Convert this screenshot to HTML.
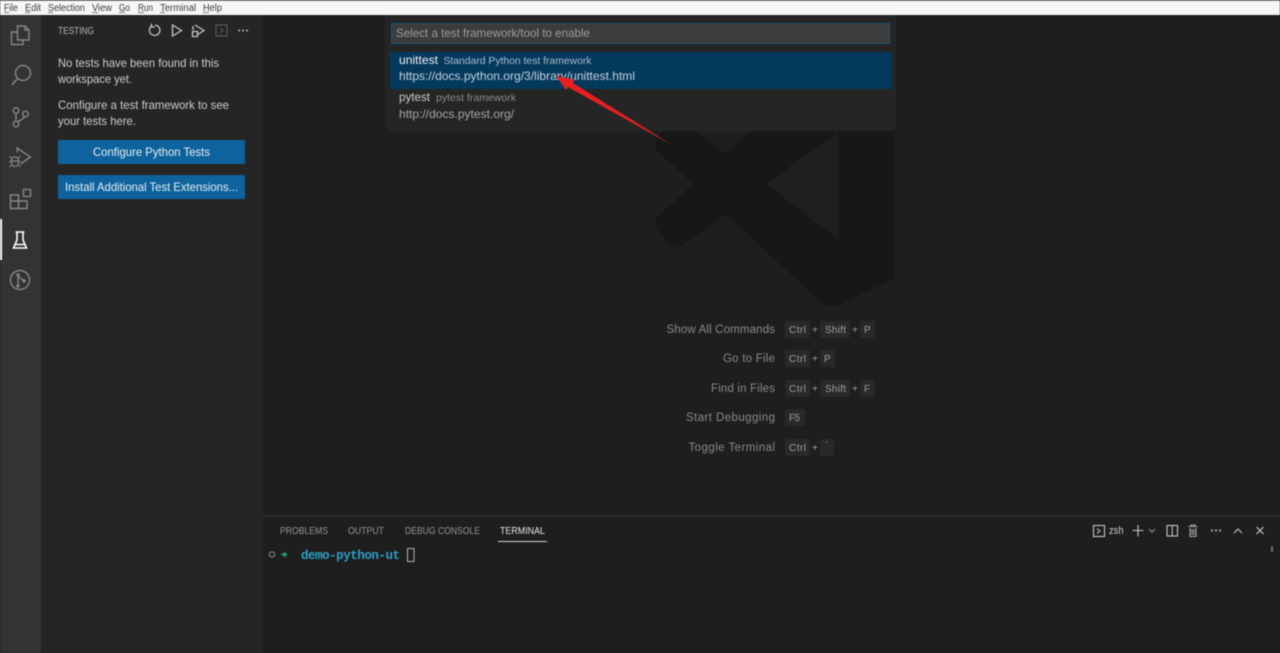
<!DOCTYPE html>
<html lang="en">
<head>
<meta charset="utf-8">
<title>Testing</title>
<style>
html,body{margin:0;padding:0;background:#1e1e1e;width:1280px;height:653px;overflow:hidden}
svg{display:block;position:absolute;left:0;top:0;filter:blur(.4px)}
text{font-family:"Liberation Sans",sans-serif;white-space:pre}
.ic{fill:none;stroke:#868686;stroke-width:1.4}
.s{fill:none;stroke:#c5c5c5;stroke-width:1.3}
.lbl{font-size:11.5px;fill:#8a8a8a}
.cap{fill:#292929}
.tab{font-size:10.5px;fill:#949494}
.k{font-size:10px;fill:#a0a0a0}
.m{font-size:10px;fill:#3c3c3c}
</style>
</head>
<body>
<svg width="1280" height="653" viewBox="0 0 1280 653" xmlns="http://www.w3.org/2000/svg">
<!-- base -->
<rect width="1280" height="653" fill="#1e1e1e"/>
<!-- watermark logo -->
<path d="M832 62 L894 89 V279 L838 305 Q830 308 822 303 L726 214 L681 246 Q674 250 668 243 L657 229 Q652 222 659 216 L693 184 L659 152 Q652 146 657 139 L668 125 Q674 118 681 122 L726 154 L822 65 Q826 61 832 62 Z" fill="#171717"/>
<path d="M766 184 L839 131 V240 Z" fill="#1f1f1f"/>
<!-- activity bar and sidebar -->
<rect x="0" y="15" width="41" height="638" fill="#333333"/>
<rect x="41" y="15" width="222" height="638" fill="#252526"/>
<!-- menu bar -->
<rect width="1280" height="15" fill="#f6f6f6"/>
<rect width="1280" height="1" fill="#8a8a8a"/>
<text x="4" y="11" textLength="14" lengthAdjust="spacingAndGlyphs" class="m">File</text>
<text x="25" y="11" textLength="16" lengthAdjust="spacingAndGlyphs" class="m">Edit</text>
<text x="48" y="11" textLength="37" lengthAdjust="spacingAndGlyphs" class="m">Selection</text>
<text x="92" y="11" textLength="20" lengthAdjust="spacingAndGlyphs" class="m">View</text>
<text x="119" y="11" textLength="11" lengthAdjust="spacingAndGlyphs" class="m">Go</text>
<text x="138" y="11" textLength="15" lengthAdjust="spacingAndGlyphs" class="m">Run</text>
<text x="160" y="11" textLength="36" lengthAdjust="spacingAndGlyphs" class="m">Terminal</text>
<text x="203" y="11" textLength="19" lengthAdjust="spacingAndGlyphs" class="m">Help</text>
<path d="M4 12.5h5M25 12.5h5M48 12.5h5M92 12.5h6M119 12.5h6M138 12.5h6M160 12.5h5M203 12.5h6" stroke="#555" stroke-width=".7" fill="none"/>
<!-- activity icons -->
<g class="ic">
<path d="M17.5 26 H25 L29 30 V40 H17.5 Z M25 26 V30 H29"/>
<path d="M17.5 32 H11.5 V44.5 H23 V40"/>
<circle cx="23" cy="73" r="7.5"/><path d="M17.5 78.5 L12 85" stroke-width="1.6"/>
<circle cx="16" cy="110.5" r="2.8"/><circle cx="16" cy="124" r="2.8"/><circle cx="25.5" cy="114" r="2.8"/>
<path d="M16 113.3 V121.2 M24.5 116.7 Q22 120 17.5 121.8"/>
<path d="M17.5 152.5 L17 148 L30.5 157 L20.5 164"/>
<path d="M11.5 159.5 A3.7 3.7 0 0 1 18.5 159.5 V163 A3.5 3.5 0 0 1 11.5 163 Z M11.5 161 H18.5" stroke-width="1.2"/>
<path d="M11.5 158 L9.5 156 M18.5 158 L20.5 156 M11.5 161.5 H9 M18.5 161.5 H21 M11.5 165 L9.5 167 M18.5 165 L20.5 167" stroke-width="1"/>
<path d="M10.5 195 H18.5 V201 H27 V208.5 H10.5 Z M10.5 201 H18.5 V208.5"/>
<rect x="23.5" y="189.5" width="7" height="7"/>
<circle cx="20" cy="280" r="9.5"/>
<path d="M18 275 V285 M18 276 L24 281"/>
</g>
<circle cx="18" cy="275" r="1.7" fill="#868686"/><circle cx="18" cy="286" r="1.7" fill="#868686"/><circle cx="24" cy="281" r="1.7" fill="#868686"/>
<rect x="0" y="219" width="2" height="41" fill="#fff"/>
<path d="M15.5 232 H24.5 M17 232 V240 L13.5 248 H26.5 L23 240 V232 M15 244.5 H25" fill="none" stroke="#fff" stroke-width="1.6"/>
<!-- sidebar -->
<text x="58" y="34" textLength="36" lengthAdjust="spacingAndGlyphs" style="font-size:10.5px" fill="#b5b5b5">TESTING</text>
<g class="s">
<path d="M151 26.5 A5.2 5.2 0 1 0 155 25 M151.5 23.5 V27 H155"/>
<path d="M172.5 25 L181.5 30.5 L172.5 36 Z"/>
<path d="M195 25 L204 30.5 L197 35 M193 30 V26"/>
<rect x="192.5" y="31.5" width="5" height="5"/>
</g>
<rect x="216" y="25" width="11" height="11" fill="none" stroke="#5f5f5f"/>
<path d="M220 28 L223 30.5 L220 33" fill="none" stroke="#5f5f5f"/>
<g fill="#c5c5c5"><circle cx="239" cy="30.5" r="1"/><circle cx="243" cy="30.5" r="1"/><circle cx="247" cy="30.5" r="1"/></g>
<text x="58" y="67" textLength="161" lengthAdjust="spacingAndGlyphs" style="font-size:12px" fill="#cccccc">No tests have been found in this</text>
<text x="58" y="83" textLength="74" lengthAdjust="spacingAndGlyphs" style="font-size:12px" fill="#cccccc">workspace yet.</text>
<text x="58" y="109" textLength="171" lengthAdjust="spacingAndGlyphs" style="font-size:12px" fill="#cccccc">Configure a test framework to see</text>
<text x="58" y="125" textLength="78" lengthAdjust="spacingAndGlyphs" style="font-size:12px" fill="#cccccc">your tests here.</text>
<rect x="58" y="140" width="187" height="24" rx="1" fill="#0e639c"/>
<rect x="58" y="175" width="187" height="24" rx="1" fill="#0e639c"/>
<text x="93" y="156" textLength="117" lengthAdjust="spacingAndGlyphs" style="font-size:12px" fill="#e6eef4">Configure Python Tests</text>
<text x="65" y="191" textLength="173" lengthAdjust="spacingAndGlyphs" style="font-size:12px" fill="#e6eef4">Install Additional Test Extensions...</text>
<!-- quick pick -->
<path d="M385 15 H896 V125 Q896 131 890 131 H391 Q385 131 385 125 Z" fill="#252526"/>
<rect x="391.5" y="23.5" width="498" height="20" fill="#3c3c3c" stroke="#1f5577"/>
<text x="396" y="37" textLength="194" lengthAdjust="spacingAndGlyphs" style="font-size:12px" fill="#9d9d9d">Select a test framework/tool to enable</text>
<rect x="390" y="52" width="502" height="37" fill="#04395e"/>
<text x="399" y="64" textLength="39" lengthAdjust="spacingAndGlyphs" style="font-size:12px" fill="#f0f0f0">unittest</text>
<text x="443.5" y="64" textLength="148" lengthAdjust="spacingAndGlyphs" style="font-size:10.5px" fill="#a9bdcb">Standard Python test framework</text>
<text x="399" y="80" textLength="236" lengthAdjust="spacingAndGlyphs" style="font-size:12px" fill="#c3d0da">https://docs.python.org/3/library/unittest.html</text>
<text x="399" y="101" textLength="31" lengthAdjust="spacingAndGlyphs" style="font-size:12px" fill="#cccccc">pytest</text>
<text x="436" y="101" textLength="80" lengthAdjust="spacingAndGlyphs" style="font-size:10.5px" fill="#8c8c8c">pytest framework</text>
<text x="399" y="118" textLength="115" lengthAdjust="spacingAndGlyphs" style="font-size:12px" fill="#a5a5a5">http://docs.pytest.org/</text>
<!-- red arrow -->
<path d="M556 76 L574 79.5 L573 83 L672 145 L568 87 L566 90 Z" fill="#e6201f"/>
<!-- shortcuts -->
<text x="666.5" y="333" textLength="108.5" class="lbl">Show All Commands</text>
<text x="723" y="362" textLength="52" class="lbl">Go to File</text>
<text x="711" y="392" textLength="64" class="lbl">Find in Files</text>
<text x="686" y="421" textLength="89" class="lbl">Start Debugging</text>
<text x="688.5" y="451" textLength="86.5" class="lbl">Toggle Terminal</text>
<g class="cap">
<rect x="785" y="321" width="25" height="17" rx="2"/><rect x="820" y="321" width="30" height="17" rx="2"/><rect x="860" y="321" width="15" height="17" rx="2"/>
<rect x="785" y="350" width="25" height="17" rx="2"/><rect x="820" y="350" width="15" height="17" rx="2"/>
<rect x="785" y="380" width="25" height="17" rx="2"/><rect x="820" y="380" width="30" height="17" rx="2"/><rect x="860" y="380" width="15" height="17" rx="2"/>
<rect x="785" y="409" width="20" height="17" rx="2"/>
<rect x="785" y="439" width="25" height="17" rx="2"/><rect x="820" y="439" width="14" height="17" rx="2"/>
</g>
<text x="789" y="333" textLength="17" class="k">Ctrl</text><text x="812" y="333" class="k">+</text><text x="825" y="333" textLength="21" class="k">Shift</text><text x="852" y="333" class="k">+</text><text x="864" y="333" class="k">P</text>
<text x="789" y="362" textLength="17" class="k">Ctrl</text><text x="812" y="362" class="k">+</text><text x="824" y="362" class="k">P</text>
<text x="789" y="392" textLength="17" class="k">Ctrl</text><text x="812" y="392" class="k">+</text><text x="825" y="392" textLength="21" class="k">Shift</text><text x="852" y="392" class="k">+</text><text x="864" y="392" class="k">F</text>
<text x="789" y="421" textLength="11" class="k">F5</text>
<text x="789" y="451" textLength="17" class="k">Ctrl</text><text x="812" y="451" class="k">+</text><text x="825" y="449" class="k">`</text>
<!-- panel -->
<rect x="263" y="516" width="1017" height="137" fill="#1e1e1e"/>
<rect x="263" y="515.5" width="1017" height="1" fill="#3a3a3a"/>
<text x="280" y="534" textLength="48" lengthAdjust="spacingAndGlyphs" class="tab">PROBLEMS</text>
<text x="348" y="534" textLength="36" lengthAdjust="spacingAndGlyphs" class="tab">OUTPUT</text>
<text x="405" y="534" textLength="75" lengthAdjust="spacingAndGlyphs" class="tab">DEBUG CONSOLE</text>
<text x="500" y="534" textLength="45" lengthAdjust="spacingAndGlyphs" style="font-size:10.5px" fill="#e7e7e7">TERMINAL</text>
<rect x="498" y="541" width="49" height="1" fill="#d5d5d5"/>
<circle cx="272" cy="554.5" r="2.7" fill="none" stroke="#7d7d7d" stroke-width="1.2"/>
<path d="M281 554.5 H286 M284 552.3 L286.4 554.5 L284 556.7" fill="none" stroke="#23a675" stroke-width="1.4"/>
<text x="301" y="559" textLength="99" style="font-family:'Liberation Mono',monospace;font-size:12.5px;font-weight:bold" fill="#2d9fc7">demo-python-ut</text>
<rect x="407.5" y="548.5" width="6.5" height="13" fill="none" stroke="#b5b5b5"/>
<!-- panel actions -->
<rect x="1093.5" y="525.5" width="11" height="11" fill="none" stroke="#c5c5c5" stroke-width="1.1"/>
<path d="M1097 528.5 L1100 531 L1097 533.5" fill="none" stroke="#c5c5c5"/>
<text x="1109" y="534" textLength="14.5" lengthAdjust="spacingAndGlyphs" style="font-size:11px" fill="#cccccc">zsh</text>
<path d="M1138 525 V536.5 M1132.5 530.5 H1143.5" stroke="#c5c5c5" stroke-width="1.1" fill="none"/>
<path d="M1149 529 L1152 532 L1155 529" stroke="#9a9a9a" fill="none"/>
<rect x="1167" y="525.5" width="10.5" height="10.5" fill="none" stroke="#c5c5c5" stroke-width="1.1"/><path d="M1172.2 525.5 V536" stroke="#c5c5c5"/>
<path d="M1188.5 526.5 H1197.5 M1191 526 V525 H1195 V526 M1190 528 V536.5 H1196 V528 M1192 529 V535 M1194 529 V535" stroke="#a8a8a8" stroke-width="1.1" fill="none"/>
<g fill="#c5c5c5"><circle cx="1212" cy="530.5" r="1"/><circle cx="1216" cy="530.5" r="1"/><circle cx="1220" cy="530.5" r="1"/></g>
<path d="M1234 533 L1238 529 L1242 533" stroke="#c5c5c5" stroke-width="1.1" fill="none"/>
<path d="M1256.5 527 L1263.5 534 M1263.5 527 L1256.5 534" stroke="#c5c5c5" stroke-width="1.2" fill="none"/>
<rect x="1271" y="546" width="2" height="6" fill="#6a6a6a"/>
</svg>
</body>
</html>
